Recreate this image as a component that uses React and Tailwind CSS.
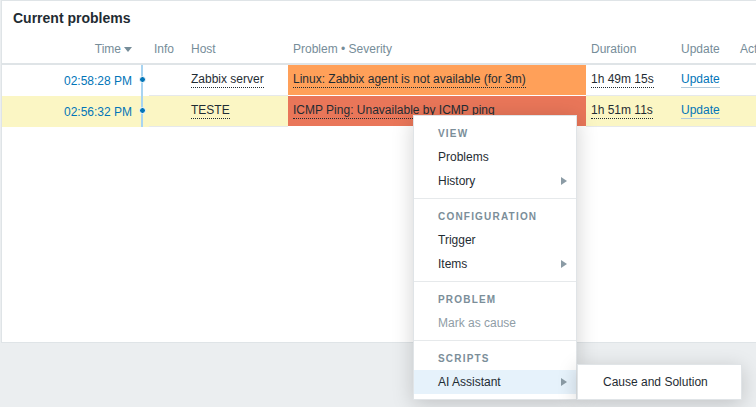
import React from 'react';

const rows = [
  {
    time: '02:58:28 PM',
    host: 'Zabbix server',
    problem: 'Linux: Zabbix agent is not available (for 3m)',
    sevBg: 'bg-[#ffa059]',
    duration: '1h 49m 15s',
    rowBg: 'bg-white',
  },
  {
    time: '02:56:32 PM',
    host: 'TESTE',
    problem: 'ICMP Ping: Unavailable by ICMP ping',
    sevBg: 'bg-[#e97659]',
    duration: '1h 51m 11s',
    rowBg: 'bg-[#fbf6c4]',
  },
];

const menu = [
  { title: 'View', items: [{ label: 'Problems' }, { label: 'History', sub: true }] },
  { title: 'Configuration', items: [{ label: 'Trigger' }, { label: 'Items', sub: true }] },
  { title: 'Problem', items: [{ label: 'Mark as cause', disabled: true }] },
  { title: 'Scripts', items: [{ label: 'AI Assistant', sub: true, active: true }] },
];

const Arrow = () => (
  <svg width="6" height="8" viewBox="0 0 6 8" className="shrink-0">
    <path d="M0 0 L6 4 L0 8 Z" fill="#8b9ba5" />
  </svg>
);

const ContextMenu = () => (
  <div className="absolute left-[413px] top-[115px] w-[164px] bg-white border border-[#e0e4e7] shadow-[0_4px_20px_0_rgba(0,0,0,0.18)]">
    {menu.map((section, i) => (
      <div key={section.title} className={`py-[5px] ${i > 0 ? 'border-t border-[#e6e9eb]' : ''}`}>
        <div className="h-6 flex items-center pl-[24px] text-[10px] font-bold uppercase tracking-[1.2px] text-[#7b8e99]">
          {section.title}
        </div>
        {section.items.map((item) => (
          <div
            key={item.label}
            className={`relative h-6 flex items-center justify-between pl-[24px] pr-[9px] text-[12px] ${
              item.disabled ? 'text-[#8f9da6]' : 'text-[#1f2c33]'
            } ${item.active ? 'bg-[#e6f2fb]' : ''}`}
          >
            <span>{item.label}</span>
            {item.sub && <Arrow />}
            {item.active && (
              <div className="absolute left-[163px] top-[-6px] w-[165px] py-[5px] bg-white border border-[#e0e4e7] shadow-[0_4px_20px_0_rgba(0,0,0,0.18)]">
                <div className="h-6 flex items-center pl-[25px] text-[12px] text-[#1f2c33]">Cause and Solution</div>
              </div>
            )}
          </div>
        ))}
      </div>
    ))}
  </div>
);

export default function App() {
  return (
    <div className="relative h-[407px] w-[756px] overflow-hidden bg-[#ebeef0] pl-px font-['Liberation_Sans',Arial,sans-serif] text-[12px] text-[#1f2c33]">
      <div className="w-[800px] h-[343px] bg-white border border-[#dfe4e7]">
        <div className="h-[34px] flex items-center pl-[11px] text-[14px] font-bold text-[#1f2c33]">Current problems</div>

        {/* header */}
        <div className="flex h-[30px] items-center border-b-2 border-[#dfe4e7] text-[#768d99]">
          <div className="w-[136px] pr-[6px] flex justify-end items-center gap-[3px]">
            Time
            <svg width="8" height="5" viewBox="0 0 8 5">
              <path d="M0 0 L8 0 L4 5 Z" fill="#768d99" />
            </svg>
          </div>
          <div className="w-[11px]" />
          <div className="w-[37px] pl-[5px]">Info</div>
          <div className="w-[102px] pl-[5px]">Host</div>
          <div className="w-[298px] pl-[5px]">Problem • Severity</div>
          <div className="w-[90px] pl-[5px]">Duration</div>
          <div className="w-[59px] pl-[5px]">Update</div>
          <div className="pl-[5px]">Actions</div>
        </div>

        {rows.map((r) => (
          <div key={r.time} className={`flex h-[31px] ${r.rowBg}`}>
            <div className="w-[136px] pr-[6px] flex items-center justify-end text-[#0275b8]">{r.time}</div>
            <div className="w-[11px] relative">
              <div className="absolute left-[3px] top-0 bottom-0 w-[2px] bg-[#a8d4f1]" />
              <div className="absolute left-[0.5px] top-[11px] w-[7px] h-[7px] rounded-full bg-[#0275b8] border-[1.5px] border-white" />
            </div>
            <div className="w-[37px] border-b border-[#e6e9eb]" />
            <div className="w-[102px] pl-[5px] flex items-center border-b border-[#e6e9eb]">
              <span className="border-b border-dotted border-[#1f2c33] leading-[15px]">{r.host}</span>
            </div>
            <div className={`w-[298px] pl-[5px] flex items-center border-b border-white ${r.sevBg}`}>
              <span className="border-b border-dotted border-[#1f2c33] leading-[15px]">{r.problem}</span>
            </div>
            <div className="w-[90px] pl-[5px] flex items-center border-b border-[#e6e9eb]">
              <span className="border-b border-dotted border-[#1f2c33] leading-[15px]">{r.duration}</span>
            </div>
            <div className="w-[59px] pl-[5px] flex items-center border-b border-[#e6e9eb]">
              <span className="text-[#0275b8] border-b border-[#b3cbdb] leading-[15px]">Update</span>
            </div>
            <div className="flex-1 border-b border-[#e6e9eb]" />
          </div>
        ))}
      </div>

      <ContextMenu />
    </div>
  );
}
